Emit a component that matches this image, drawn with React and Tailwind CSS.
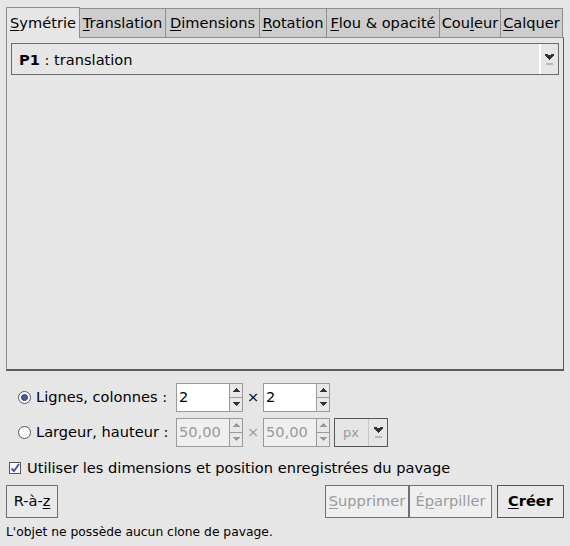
import React from "react";

const U = ({ children }) => <span className="underline underline-offset-2">{children}</span>;

function Tab({ active, w, children }) {
  if (active) {
    return (
      <div className={"h-[31px] flex items-center justify-center bg-[#e6e6e6] border border-[#8e8e8e] border-b-0 relative top-[1px] z-10 text-black " + w}>
        {children}
      </div>
    );
  }
  return (
    <div className={"h-[29px] flex items-center justify-center bg-[#cdcdcd] border border-[#8e8e8e] border-l-0 border-b-0 text-black " + w}>
      {children}
    </div>
  );
}

function Arrow({ down, disabled }) {
  const c = disabled ? "#9a9a9a" : "#333";
  return (
    <svg width="7" height="5" viewBox="0 0 7 5">
      {down ? (
        <path d="M0 0h7v1h-1v1h-1v1h-1v1h-1v-1h-1v-1h-1v-1h-1z" fill={c} />
      ) : (
        <path d="M3 0h1v1h1v1h1v1h1v1h-7v-1h1v-1h1v-1h1z" fill={c} />
      )}
    </svg>
  );
}

function Spin({ value, disabled }) {
  return (
    <div className="flex h-[29px]">
      <div
        className={
          "w-[54px] h-full border border-[#9a9a9a] flex items-center pl-[2px] " +
          (disabled ? "bg-[#efefef] text-[#9a9a9a]" : "bg-white text-black")
        }
      >
        {value}
      </div>
      <div className="flex flex-col w-[14px] h-full ml-[-1px]">
        <div className="h-[15px] border border-[#9a9a9a] bg-[#e9e9e9] flex items-center justify-center">
          <Arrow disabled={disabled} />
        </div>
        <div className="h-[14px] border border-[#9a9a9a] border-t-0 bg-[#e9e9e9] flex items-center justify-center">
          <Arrow down disabled={disabled} />
        </div>
      </div>
    </div>
  );
}

function ComboArrow() {
  return (
    <div className="flex flex-col items-center gap-[3px]">
      <svg width="9" height="6" viewBox="0 0 9 6">
        <path d="M0 0h3v1h3v-1h3v2h-1v1h-1v1h-1v1h-1v1h-1v-1h-1v-1h-1v-1h-1v-1h-1z" fill="#333" />
      </svg>
      <div className="w-[7px] h-[2px] bg-[#b8b8b8]" />
    </div>
  );
}

function Radio({ checked }) {
  return (
    <div className="w-[13px] h-[13px] rounded-full border border-[#555] bg-white flex items-center justify-center">
      {checked && <div className="w-[7px] h-[7px] rounded-full bg-[#4a5c9c] border border-[#2d3d78]" />}
    </div>
  );
}

export default function App() {
  return (
    <div
      className="w-[570px] h-[546px] bg-[#e6e6e6] text-[14.6px] text-black leading-none overflow-hidden"
      style={{ fontFamily: '"DejaVu Sans", sans-serif' }}
    >
      <div className="px-[6px] pt-[6px]">
        <div className="flex items-end h-[31px]">
          <Tab active w="w-[74px]">
            <span><U>S</U>ymétrie</span>
          </Tab>
          <Tab w="w-[86px]"><span><U>T</U>ranslation</span></Tab>
          <Tab w="w-[94px]"><span><U>D</U>imensions</span></Tab>
          <Tab w="w-[67px]"><span><U>R</U>otation</span></Tab>
          <Tab w="w-[113px]"><span><U>F</U>lou &amp; opacité</span></Tab>
          <Tab w="w-[61px]"><span>Cou<U>l</U>eur</span></Tab>
          <Tab w="w-[62px]"><span><U>C</U>alquer</span></Tab>
        </div>
        <div className="h-[334px] border border-[#8e8e8e] border-b-[#5a5a5a] border-r-[#5a5a5a] border-b-2 pt-[5px] px-[4px]">
          <div className="h-[32px] border border-[#6a6a6a] flex items-stretch bg-[#e6e6e6]">
            <div className="flex-1 flex items-center pl-[7px] pt-[2px]">
              <span className="font-bold">P1</span>
              <span>&nbsp;: translation</span>
            </div>
            <div className="w-[19px] border-l-2 border-l-white flex items-center justify-center">
              <ComboArrow />
            </div>
          </div>
        </div>
      </div>

      <div className="pl-[18px] pt-[12px] flex flex-col gap-[6px]">
        <div className="flex items-center h-[29px]">
          <Radio checked />
          <span className="ml-[5px] w-[140px]">Lignes, colonnes :</span>
          <Spin value="2" />
          <span className="w-[20px] text-center">×</span>
          <Spin value="2" />
        </div>
        <div className="flex items-center h-[29px]">
          <Radio />
          <span className="ml-[5px] w-[140px]">Largeur, hauteur :</span>
          <Spin value="50,00" disabled />
          <span className="w-[20px] text-center text-[#9a9a9a]">×</span>
          <Spin value="50,00" disabled />
          <div className="ml-[4px] h-[29px] w-[54px] border border-[#555] flex items-stretch">
            <div className="flex-1 flex items-center pl-[8px] text-[#9a9a9a] text-[13px]">px</div>
            <div className="w-[19px] border-l border-l-[#c8c8c8] flex items-center justify-center">
              <ComboArrow />
            </div>
          </div>
        </div>
      </div>

      <div className="pl-[9px] pt-[14px] flex items-center h-[28px]">
        <div className="w-[12px] h-[12px] border border-[#555] bg-white flex items-center justify-center">
          <svg width="10" height="10" viewBox="0 0 10 10">
            <path d="M1.5 5.5 L4 8 L9 1" stroke="#3d55a8" strokeWidth="1.8" fill="none" />
          </svg>
        </div>
        <span className="ml-[6px]">Utiliser les dimensions et position enregistrées du pavage</span>
      </div>

      <div className="flex items-center px-[6px] pt-[10px] h-[43px]">
        <div className="h-[33px] w-[52px] border border-[#707070] flex items-center justify-center bg-[#e9e9e9]">
          <span>R-à-<U>z</U></span>
        </div>
        <div className="flex-1" />
        <div className="h-[33px] w-[84px] border border-[#707070] flex items-center justify-center bg-[#efefef] text-[#9a9a9a]">
          <span><U>S</U>upprimer</span>
        </div>
        <div className="h-[33px] w-[83px] border border-[#707070] flex items-center justify-center bg-[#efefef] text-[#9a9a9a]">
          <span>É<U>p</U>arpiller</span>
        </div>
        <div className="h-[33px] w-[67px] ml-[5px] border border-[#555] flex items-center justify-center bg-[#e9e9e9] font-bold">
          <span><U>C</U>réer</span>
        </div>
      </div>

      <div className="px-[6px] pt-[8px] text-[12.3px]">L'objet ne possède aucun clone de pavage.</div>
    </div>
  );
}
